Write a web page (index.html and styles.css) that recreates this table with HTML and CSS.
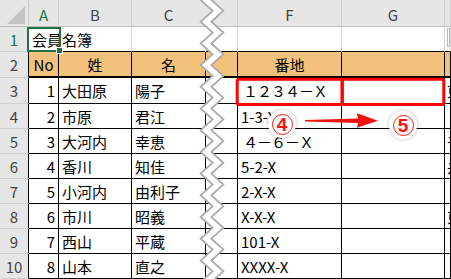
FILE: index.html
```html
<!DOCTYPE html>
<html lang="ja">
<head>
<meta charset="utf-8">
<title>会員名簿</title>
<link rel="stylesheet" href="styles.css">
</head>
<body>
<div class="sheet">
  <div class="corner"></div>
  <div class="ch sel">A</div>
  <div class="ch">B</div>
  <div class="ch nb">C</div>
  <div class="ch"></div>
  <div class="ch">F</div>
  <div class="ch">G</div>
  <div class="ch"></div>

  <div class="rh sel">1</div>
  <div class="g a1">会員名簿</div>
  <div class="g"></div>
  <div class="g nb"></div>
  <div class="g"></div>
  <div class="g"></div>
  <div class="g"></div>
  <div class="g"><span class="hbox"></span></div>

  <div class="rh tb">2</div>
  <div class="t hd">No</div>
  <div class="t hd">姓</div>
  <div class="t hd">名</div>
  <div class="t hd"></div>
  <div class="t hd">番地</div>
  <div class="t hd"></div>
  <div class="t hd"></div>

  <div class="rh tb">3</div>
  <div class="t num">1</div>
  <div class="t">大田原</div>
  <div class="t">陽子</div>
  <div class="t"></div>
  <div class="t fw">１２３４－Ｘ</div>
  <div class="t"></div>
  <div class="t h">東</div>

  <div class="rh tb">4</div>
  <div class="t num">2</div>
  <div class="t">市原</div>
  <div class="t">君江</div>
  <div class="t"></div>
  <div class="t">1-3-X</div>
  <div class="t"></div>
  <div class="t h"></div>

  <div class="rh tb">5</div>
  <div class="t num">3</div>
  <div class="t">大河内</div>
  <div class="t">幸恵</div>
  <div class="t"></div>
  <div class="t fw">４－６－Ｘ</div>
  <div class="t"></div>
  <div class="t h">千</div>

  <div class="rh tb">6</div>
  <div class="t num">4</div>
  <div class="t">香川</div>
  <div class="t">知佳</div>
  <div class="t"></div>
  <div class="t">5-2-X</div>
  <div class="t"></div>
  <div class="t h">糸</div>

  <div class="rh tb">7</div>
  <div class="t num">5</div>
  <div class="t">小河内</div>
  <div class="t">由利子</div>
  <div class="t"></div>
  <div class="t">2-X-X</div>
  <div class="t"></div>
  <div class="t h"></div>

  <div class="rh tb">8</div>
  <div class="t num">6</div>
  <div class="t">市川</div>
  <div class="t">昭義</div>
  <div class="t"></div>
  <div class="t">X-X-X</div>
  <div class="t"></div>
  <div class="t h">東</div>

  <div class="rh tb">9</div>
  <div class="t num">7</div>
  <div class="t">西山</div>
  <div class="t">平蔵</div>
  <div class="t"></div>
  <div class="t">101-X</div>
  <div class="t"></div>
  <div class="t h"></div>

  <div class="rh tb">10</div>
  <div class="t num">8</div>
  <div class="t">山本</div>
  <div class="t">直之</div>
  <div class="t"></div>
  <div class="t">XXXX-X</div>
  <div class="t"></div>
  <div class="t h"></div>
</div>

<svg class="overlay" width="451" height="279" viewBox="0 0 451 279">
  <path class="zz-edge" d="M218 -10.85 l-12 10.85 l12 10.85 l-12 10.85 l12 10.85 l-12 10.85 l12 10.85 l-12 10.85 l12 10.85 l-12 10.85 l12 10.85 l-12 10.85 l12 10.85 l-12 10.85 l12 10.85 l-12 10.85 l12 10.85 l-12 10.85 l12 10.85 l-12 10.85 l12 10.85 l-12 10.85 l12 10.85 l-12 10.85 l12 10.85 l-12 10.85 l12 10.85 l-12 10.85 l12 10.85"/>
  <path class="zz-fill" d="M218 -10.85 l-12 10.85 l12 10.85 l-12 10.85 l12 10.85 l-12 10.85 l12 10.85 l-12 10.85 l12 10.85 l-12 10.85 l12 10.85 l-12 10.85 l12 10.85 l-12 10.85 l12 10.85 l-12 10.85 l12 10.85 l-12 10.85 l12 10.85 l-12 10.85 l12 10.85 l-12 10.85 l12 10.85 l-12 10.85 l12 10.85 l-12 10.85 l12 10.85 l-12 10.85 l12 10.85"/>
  <rect class="mark" x="237.2" y="79.2" width="105" height="25.3" rx="2"/>
  <rect class="mark" x="342.2" y="79.2" width="101.6" height="25.3" rx="2"/>
  <path class="arrow" d="M305 120.1 L358 118.4 L357 113.3 L378 120.7 L357 127.8 L358 123 L305 121.5 Z"/>
</svg>

<div class="badge b4"><span class="ring">4</span></div>
<div class="badge b5"><span class="ring">5</span></div>
</body>
</html>
```

FILE: styles.css
```css
html, body {
  margin: 0;
  padding: 0;
  background: #fff;
}
body {
  width: 451px;
  height: 279px;
  overflow: hidden;
  position: relative;
  font-family: "Noto Sans CJK JP", "Noto Sans", sans-serif;
  font-size: 15px;
  color: #000;
}
.sheet {
  display: grid;
  grid-template-columns: 29px 30px 73px 74px 32px 104px 103px 6px;
  grid-template-rows: 27px 25px 26px 26px 25px 25px 25px 25px 25px 25px 25px;
}
.sheet > div {
  box-sizing: border-box;
  display: flex;
  align-items: center;
  white-space: nowrap;
  overflow: hidden;
  line-height: 1;
}
.corner {
  background: #e6e6e6;
  border-right: 1px solid #c8c8c8;
  border-bottom: 1px solid #bdbdbd;
  position: relative;
}
.corner::after {
  content: "";
  position: absolute;
  right: 3px;
  bottom: 2px;
  width: 0;
  height: 0;
  border-left: 18px solid transparent;
  border-bottom: 18px solid #c4c4c4;
}
.ch {
  background: #e6e6e6;
  border-right: 1px solid #d0d0d0;
  border-bottom: 1px solid #bdbdbd;
  justify-content: center;
  color: #444;
  padding-top: 2px;
}
.ch.nb { border-right-color: #e6e6e6; }
.rh {
  background: #e6e6e6;
  border-right: 1px solid #bdbdbd;
  border-bottom: 1px solid #d0d0d0;
  justify-content: center;
  color: #444;
}
.rh.tb { border-right-color: #000; }
.sel { color: #217346; }
.g {
  border-right: 1px solid #dadada;
  border-bottom: 1px solid #000;
}
.g.nb { border-right-color: #fff; }
.sheet > .a1 {
  overflow: visible;
  padding-left: 3px;
  position: relative;
  border-right: none;
}
.a1::after {
  content: "";
  position: absolute;
  left: -2px;
  right: -2px;
  top: 0;
  bottom: -1px;
  border: 2px solid #217346;
}
.a1::before {
  content: "";
  position: absolute;
  right: -4px;
  bottom: -3px;
  width: 5px;
  height: 5px;
  background: #217346;
  border: 1px solid #fff;
  z-index: 1;
}
.hbox {
  display: block;
  width: 10px;
  height: 19px;
  margin-left: 2px;
  margin-top: -4px;
  border: 1px solid #b8b8b8;
  box-sizing: border-box;
}
.t {
  border-right: 1px solid #000;
  border-bottom: 1px solid #000;
  padding-left: 3px;
}
.sheet > .hd {
  background: #f2c27c;
  justify-content: center;
  padding-left: 0;
  border-bottom-width: 2px;
}
.sheet > .num {
  justify-content: flex-end;
  padding-left: 0;
  padding-right: 3px;
}
.fw { padding-left: 5px; letter-spacing: -1px; }
.sheet > .h { padding-left: 2px; }
.overlay {
  position: absolute;
  left: 0;
  top: 0;
  pointer-events: none;
}
.zz-edge {
  fill: none;
  stroke: #ababab;
  stroke-width: 9;
  stroke-linejoin: miter;
}
.zz-fill {
  fill: none;
  stroke: #fff;
  stroke-width: 5.4;
  stroke-linejoin: miter;
}
.mark {
  fill: none;
  stroke: #ff0000;
  stroke-width: 3;
}
.arrow { fill: #f01010; }
.badge {
  position: absolute;
  width: 28px;
  height: 28px;
  border-radius: 50%;
  background: #fff;
  box-shadow: 0 0 4px 1px rgba(0, 0, 0, 0.16);
  display: flex;
  align-items: center;
  justify-content: center;
}
.b4 { left: 268px; top: 110px; }
.b5 { left: 389px; top: 111px; }
.ring {
  box-sizing: border-box;
  width: 21px;
  height: 21px;
  border: 1.5px solid #ff1a1a;
  border-radius: 50%;
  display: flex;
  align-items: center;
  justify-content: center;
  color: #ff1010;
  font-family: "Liberation Sans", Arial, sans-serif;
  font-weight: bold;
  font-size: 19px;
  line-height: 1;
  padding-top: 1px;
}
```
